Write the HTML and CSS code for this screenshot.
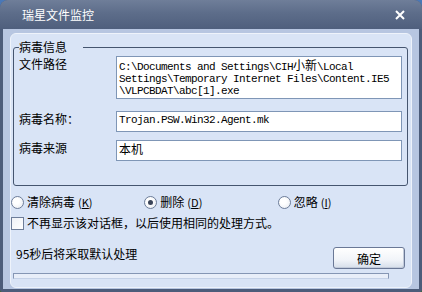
FILE: index.html
```html
<!DOCTYPE html>
<html lang="zh-CN">
<head>
    <meta charset="UTF-8">
    <title>瑞星文件监控</title>
    <link rel="stylesheet" href="styles.css">
</head>
<body>

<div class="window">
    <div class="titlebar">
        <span class="title">瑞星文件监控</span>
        <svg class="close" width="10" height="10" viewBox="0 0 10 10">
            <path d="M1 1 L9 9 M9 1 L1 9" stroke="#fff" stroke-width="2" />
        </svg>
    </div>

    <div class="frame">
        <div class="panel">
            <fieldset class="group">
                <legend>病毒信息</legend>
                <div class="row">
                    <span class="label">文件路径</span>
                    <div class="box box-path">C:\Documents and Settings\CIH<span class="cjk">小新</span>\Local<br>Settings\Temporary Internet Files\Content.IE5<br>\VLPCBDAT\abc[1].exe</div>
                </div>
                <div class="row row-name">
                    <span class="label">病毒名称：</span>
                    <div class="box">Trojan.PSW.Win32.Agent.mk</div>
                </div>
                <div class="row row-source">
                    <span class="label">病毒来源</span>
                    <div class="box"><span class="cjk">本机</span></div>
                </div>
            </fieldset>

            <div class="options">
                <label class="option"><span class="radio"></span>清除病毒 <span class="key">(<u>K</u>)</span></label>
                <label class="option"><span class="radio checked"></span>删除 <span class="key">(<u>D</u>)</span></label>
                <label class="option"><span class="radio"></span>忽略 <span class="key">(<u>I</u>)</span></label>
            </div>

            <label class="remember"><span class="check"></span>不再显示该对话框，以后使用相同的处理方式。</label>

            <div class="footer">
                <span class="countdown">95秒后将采取默认处理</span>
                <button class="ok">确定</button>
            </div>

            <div class="progress"></div>
        </div>
    </div>
</div>

</body>
</html>
```

FILE: styles.css
```css
body {
    margin: 0;
    padding: 0;
    width: 422px;
    height: 292px;
    overflow: hidden;
    font-family: 'Noto Sans CJK SC', sans-serif;
    font-size: 12px;
    background: linear-gradient(#4a78b8 0%, #3f6e9f 40%, #4f7d2e 70%, #3d6a22 100%);
}

.window {
    width: 422px;
    height: 292px;
    box-sizing: border-box;
    padding: 0 3px 3px;
    display: flex;
    flex-direction: column;
    background: #4c5c7a;
    border-radius: 8px 8px 2px 2px;
}

.titlebar {
    height: 28px;
    flex: none;
    display: flex;
    align-items: center;
    justify-content: space-between;
    padding: 1px 17px 0 22px;
    margin: 0 -3px;
    border-radius: 8px 8px 0 0;
    background: linear-gradient(#6f7e99 0%, #5d6d8a 45%, #4f5f7d 100%);
    color: #fff;
}

.title {
    line-height: 14px;
}

.close {
    display: block;
}

.frame {
    flex: 1;
    display: flex;
    padding: 4px 7px 1px;
    background: #b7c6e1;
}

.panel {
    flex: 1;
    min-width: 0;
    display: flex;
    flex-direction: column;
    background: #d9e4f6;
    border: 1px solid #eef3fb;
    border-radius: 6px;
    color: #000;
}

.group {
    min-width: 0;
    margin: 6px 3px 0 2px;
    padding: 2px 5px 24px 5px;
    border: 1px solid #45556f;
    border-radius: 3px;
}

.group legend {
    padding: 0 16px 0 0;
    line-height: 14px;
}

.row {
    display: flex;
    align-items: flex-start;
}

.row-name {
    margin-top: 12px;
}

.row-source {
    margin-top: 8px;
}

.label {
    width: 97px;
    flex: none;
    padding-top: 1px;
    line-height: 14px;
}

.box {
    flex: 1;
    min-width: 0;
    height: 21px;
    box-sizing: border-box;
    padding: 2px 2px 0;
    overflow: hidden;
    background: #fff;
    border: 1px solid #7f96b6;
    font-family: 'Liberation Mono', monospace;
    font-size: 11px;
    letter-spacing: -0.6px;
    line-height: 12px;
    white-space: nowrap;
}

.box-path {
    height: 43px;
}

.cjk {
    font-family: 'Noto Sans CJK SC', sans-serif;
    font-size: 12px;
    letter-spacing: 0;
}

.options {
    display: flex;
    margin-top: 8px;
    height: 16px;
    align-items: center;
}

.option {
    width: 135px;
    display: flex;
    align-items: center;
    line-height: 14px;
}

.key {
    margin-left: 3px;
    font-size: 11px;
}

.radio {
    width: 11px;
    height: 11px;
    margin-right: 3px;
    border: 1px solid #6d7d99;
    border-radius: 50%;
    background: radial-gradient(circle at 40% 40%, #fff 30%, #e4e8ef 100%);
    display: flex;
    align-items: center;
    justify-content: center;
}

.radio.checked::after {
    content: '';
    width: 5px;
    height: 5px;
    border-radius: 50%;
    background: #3b4458;
}

.remember {
    display: flex;
    align-items: center;
    margin-top: 6px;
    line-height: 14px;
}

.check {
    width: 11px;
    height: 11px;
    margin-right: 3px;
    border: 1px solid #6d7d99;
    background: linear-gradient(135deg, #eef1f6, #fff);
}

.footer {
    display: flex;
    justify-content: space-between;
    align-items: flex-start;
    margin-top: 17px;
}

.countdown {
    margin-left: 5px;
    line-height: 14px;
}

.ok {
    width: 72px;
    height: 22px;
    margin-right: 6px;
    padding: 0;
    font-family: 'Noto Sans CJK SC', sans-serif;
    font-size: 12px;
    color: #000;
    border: 1px solid #6a7896;
    border-radius: 3px;
    background: linear-gradient(#ffffff 0%, #f1f4f9 60%, #d6deea 100%);
    box-shadow: inset -1px -1px 0 #c2cbdb;
}

.progress {
    width: 376px;
    height: 6px;
    margin: 4px 0 0 2px;
    box-sizing: border-box;
    border: 1px solid #8596b4;
    border-bottom-color: #c5d2e8;
    background: #e8eef9;
}
```
